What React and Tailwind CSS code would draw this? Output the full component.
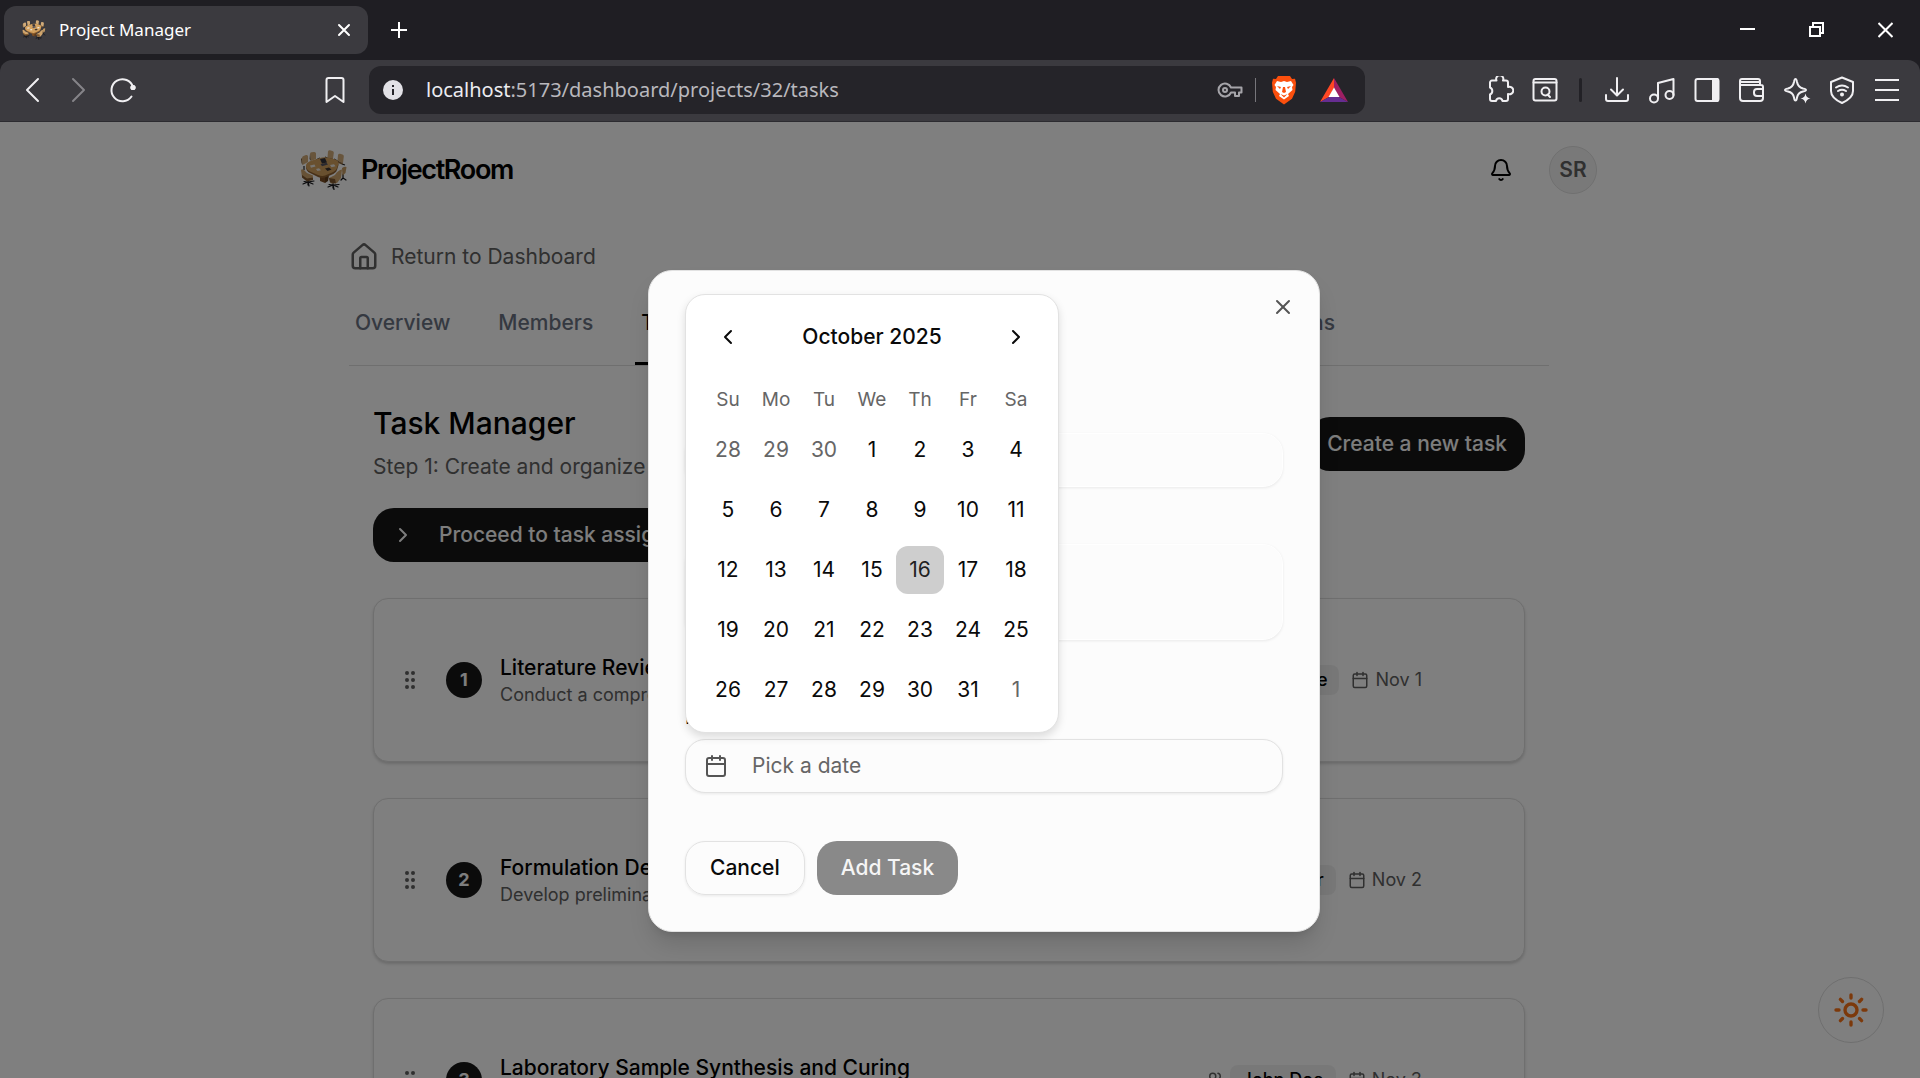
import React from "react";
import { Bell, Calendar, ChevronLeft, ChevronRight, GripVertical, House, Sun, Users, X } from "lucide-react";

const stroke = { fill: "none", stroke: "currentColor", strokeWidth: 2, strokeLinecap: "round", strokeLinejoin: "round" };

function MeetingTable({ className }) {
  return (
    <svg viewBox="0 0 46 40" className={className} aria-hidden="true">
      <path d="M3 16v4M15 10l4-2M33 9l5 3M41 14l3 1M24 7l4 2" stroke="#26262b" strokeWidth="1.200" />
      <path d="M1 8q0-1.500 1.500-2L5 5q2-.5 2 1.500V12l-5.500 3z" fill="#d0aa78" />
      <path d="M1 8l.5 7L.5 13 0 9z" fill="#7b5a34" />
      <path d="M9 4q0-1.500 1.500-1.800L13 2q2-.2 2 1.500V9l-5 2z" fill="#d0aa78" />
      <path d="M9 4l1 7L8.500 9z" fill="#7b5a34" />
      <path d="M27 1.500Q27.500 0 29 .3L31.500 1q1.500.5 1.300 2L32 8.500l-5.500-1z" fill="#d0aa78" />
      <path d="M26.500 7.500l5.500 1-.5 1.500-5-1z" fill="#8a6437" />
      <path d="M37 5q.5-1.500 2-1.200l2.500.8q1.500.5 1.300 2L42 13l-5.500-2z" fill="#d0aa78" />
      <path d="M36.500 11l5.500 2-1 1.500-5-2z" fill="#8a6437" />
      <path d="M19 25h7l-2 8-5-2z" fill="#7a4d24" />
      <path d="M24 25h4l-1 6-3 2z" fill="#5f3a19" />
      <path d="M5 17q0-3 6-5l8-3q3-1 7-.5l7 1.500q5 1.500 4.500 5L36 20q-1 3-6 5l-6 2.500q-3 1-7-.5l-8-4q-4-2-4-6z" fill="#8f602f" />
      <path d="M5 15.500q0-3 6-5l8-2.500q3-1 7-.5l7 1.500q5 1.500 4.500 4.500L36 18q-1 3-6 5l-6 2.500q-3 1-7-.5l-8-3.500q-4-2-4-6z" fill="#d3a15f" />
      <path d="M19 9l5-1 2 4.500-5 1z" fill="#33323b" />
      <path d="M19.500 14l6-1.300 1.500 1.800-6 1.800z" fill="#55535e" />
      <path d="M9 15.500l4.500-1 1 2-4.500 1.200zM29 15l4-.8 1.500 2-4 1zM15 19l3-.8 2 2-3.500.8z" fill="#efebe4" />
      <path d="M24 18.500l4-1 2.500 2-4 1.500z" fill="#3c3330" />
      <path d="M7 29v6M2 34l5-2 5 2M3 31.500l4 .5 6-1M7 32l1 4M32 33v5M27 37l5-2 5 2M28 34.500l4 .5 6-.5M32 35l1 4.500M42 24v4l3 2M42 28l-2 2" fill="none" stroke="#16161a" strokeWidth="1.200" strokeLinecap="round" />
      <path d="M0 20q1-1.500 3 0l3 3 6 2.500-.5 4L6 30l-5-3z" fill="#cfa46c" />
      <path d="M1 25l5 3.500 6-1v2.500l-6 1.500-5-4z" fill="#80592f" />
      <path d="M41 18q3-2 4.500-1l-1 6-3 2.500z" fill="#c49a62" />
      <path d="M28 28l6-3q3-5 7-5.500L40 28l-4 5-6 .5z" fill="#cfa46c" />
      <path d="M28 28l6 1 1 4.500-6-1z" fill="#80592f" />
    </svg>
  );
}

function ToolButton({ label, children, className = "w-[45px]" }) {
  return (
    <button type="button" aria-label={label} className={`flex h-12 shrink-0 items-center justify-center text-[#f0eff2] ${className}`}>
      {children}
    </button>
  );
}

function Glyph({ children, size = 28 }) {
  return (
    <svg width={size} height={size} viewBox="0 0 28 28" {...stroke} aria-hidden="true">
      {children}
    </svg>
  );
}

function BrowserChrome() {
  return (
    <div className="shrink-0 bg-[#1f1e23] font-['Noto_Sans',sans-serif] text-white">
      <div className="flex h-[60px] items-center justify-between pl-1">
        <div className="flex items-center">
          <div className="flex h-12 w-[364px] items-center rounded-xl bg-[#3b3a3f] pr-3 pl-[18px]">
            <MeetingTable className="h-5 w-6" />
            <span className="ml-[13px] flex-1 text-[17px]">Project Manager</span>
            <button type="button" aria-label="Close tab" className="flex size-6 items-center justify-center">
              <svg width="14" height="14" viewBox="0 0 14 14" {...stroke} aria-hidden="true"><path d="M2 2l10 10M12 2L2 12" /></svg>
            </button>
          </div>
          <button type="button" aria-label="New tab" className="ml-[7px] flex size-12 items-center justify-center">
            <svg width="16" height="16" viewBox="0 0 16 16" stroke="currentColor" strokeWidth="2" aria-hidden="true"><path d="M8 0v16M0 8h16" /></svg>
          </button>
        </div>
        <div className="flex h-full items-center">
          <button type="button" aria-label="Minimize" className="flex h-full w-[69px] items-center justify-center">
            <svg width="15" height="16" viewBox="0 0 15 16" aria-hidden="true"><path d="M0 7h15" stroke="currentColor" strokeWidth="2" /></svg>
          </button>
          <button type="button" aria-label="Restore" className="flex h-full w-[69px] items-center justify-center">
            <svg width="15" height="16" viewBox="0 0 15 16" fill="none" stroke="currentColor" strokeWidth="2" aria-hidden="true"><path d="M1 5h10v9H1zM4 5V1h10v10h-3" /></svg>
          </button>
          <button type="button" aria-label="Close window" className="flex h-full w-[69px] items-center justify-center">
            <svg width="15" height="16" viewBox="0 0 15 16" stroke="currentColor" strokeWidth="2" aria-hidden="true"><path d="M.5 1l14 14M14.500 1l-14 14" /></svg>
          </button>
        </div>
      </div>
      <div className="flex h-[62px] items-start rounded-t-xl border-b border-[#2c2b30] bg-[#3b3a3f] pt-[6px]">
        <div className="flex w-[369px] shrink-0 items-center pl-[10px]">
          <ToolButton label="Back"><Glyph><path d="M19 3L8 14l11 11" /></Glyph></ToolButton>
          <span className="text-[#858489] [&_button]:text-[#858489]">
            <ToolButton label="Forward"><Glyph><path d="M9 3l11 11L9 25" /></Glyph></ToolButton>
          </span>
          <ToolButton label="Reload">
            <Glyph><path d="M24 11A11 11 0 1 0 22.500 20.500" /><circle cx="24" cy="11.500" r="2.600" fill="currentColor" stroke="none" /><circle cx="24" cy="11.500" r="1.500" fill="currentColor" /></Glyph>
          </ToolButton>
          <ToolButton label="Bookmark" className="ml-auto w-[68px]">
            <Glyph><path d="M5.500 4a2 2 0 0 1 2-2h13a2 2 0 0 1 2 2v22l-8.500-6-8.500 6z" /></Glyph>
          </ToolButton>
        </div>
        <div className="flex h-12 min-w-0 flex-1 items-center rounded-xl bg-[#252429] pr-[13px] pl-[14px]">
          <svg width="20" height="20" viewBox="0 0 20 20" className="shrink-0" aria-hidden="true">
            <circle cx="10" cy="10" r="10" fill="#e2e1e6" />
            <path d="M10 9v6M10 5v2" stroke="#252429" strokeWidth="2" />
          </svg>
          <p className="ml-[23px] flex-1 truncate text-xl text-[#b9b8bd]"><span className="text-[#ececf0]">localhost</span>:5173/dashboard/projects/32/tasks</p>
          <svg width="26" height="20" viewBox="0 0 26 20" fill="none" stroke="#a5a4a9" strokeWidth="2" strokeLinejoin="round" aria-hidden="true">
            <path d="M14 7.500A6.500 6.500 0 1 0 14 12.500h4V16h4v-3.500h2.500v-5z" /><circle cx="8" cy="10" r="2" />
          </svg>
          <span className="mx-[12px] h-6 w-px bg-[#77767b]" />
          <svg width="32" height="30" viewBox="0 0 32 30" aria-label="Brave Shields">
            <path d="M10 1h12l2 3 3-.3 1 4-.8 9-3.200 7L16 29.500 8 23.700 4.800 16.700 4 7.700l1-4L8 4z" fill="#fb4f0d" />
            <path d="M9 6l4 1 3-1 3 1 4-1 2.500 4-1.500 2 .5 3-4.500 4 1 2-5 3.500L11 21l1-2-4.500-4 .5-3-1.500-2z" fill="#fff" />
            <path d="M9 11l4 1-1 2zM23 11l-4 1 1 2zM15 12h2l1 5-2 1-2-1zM12.500 19l3.500 1.500 3.500-1.500-3.500 3.500z" fill="#fb4f0d" />
          </svg>
          <svg width="28" height="24" viewBox="0 0 28 24" className="ml-[20px]" aria-label="Brave Rewards">
            <path d="M14 0L0 24l9-5 5-9z" fill="#ff4724" /><path d="M14 0l14 24-9-5-5-9z" fill="#9e1f63" /><path d="M0 24h28l-9-5H9z" fill="#662d91" /><path d="M14 9.500l5.500 9.500h-11z" fill="#fff" />
          </svg>
          <span className="w-1" />
        </div>
        <div className="flex w-[555px] shrink-0 items-center justify-end pr-[11px]">
          <ToolButton label="Extensions">
            <Glyph><path d="M4 6.500a2 2 0 0 1 2-2h4.500a3.600 3.600 0 1 1 6.500 0H20a2 2 0 0 1 2 2V11a3.800 3.800 0 1 1 0 7v5a2 2 0 0 1-2 2h-3.500a3.300 3.300 0 0 0-6.500 0H6a2 2 0 0 1-2-2v-4.500a3.800 3.800 0 0 0 0-7z" /></Glyph>
          </ToolButton>
          <ToolButton label="Search tabs">
            <Glyph><rect x="2.500" y="3" width="23" height="21.500" rx="2" /><path d="M2.500 6.500h23M16.500 18.500l2.500 2.500" /><circle cx="14.500" cy="15.500" r="4" /></Glyph>
          </ToolButton>
          <span className="mx-3 h-6 w-[3px] rounded-full bg-[#222126]" />
          <ToolButton label="Downloads"><Glyph><path d="M14 2v17M8 13.500l6 6 6-6M3 19v4a2 2 0 0 0 2 2h18a2 2 0 0 0 2-2v-4" /></Glyph></ToolButton>
          <ToolButton label="Playlist"><Glyph><circle cx="6" cy="22.500" r="4" /><circle cx="21.500" cy="19" r="4" /><path d="M10 22V7l15.500-4v16" /></Glyph></ToolButton>
          <ToolButton label="Sidebar"><Glyph><rect x="2.500" y="3" width="23" height="22" rx="2" /><path d="M20 3h4.500v22H20z" fill="currentColor" /></Glyph></ToolButton>
          <ToolButton label="Wallet"><Glyph><path d="M22 9V5a2 2 0 0 0-2-2H4a2 2 0 0 0-2 2v17a3 3 0 0 0 3 3h17a3 3 0 0 0 3-3V11a2 2 0 0 0-2-2H3M3 6h18M25 13h-6a3 3 0 0 0-3 3v1a3 3 0 0 0 3 3h6" /></Glyph></ToolButton>
          <ToolButton label="Leo AI"><Glyph><path d="M12.500 3q1 0 1.500 3 1 5 6 6.500 3 .5 3 1.500t-3 1.500q-5 1-6 6-.5 3-1.500 3t-1.500-3q-1-5-6-6-3-.5-3-1.500t3-1.500q5-1.500 6-6.500.5-3 1.500-3z" /><path d="M22.500 17.500q.8 4.500 5 5-4.200.7-5 5-.8-4.300-5-5 4.200-.5 5-5z" fill="currentColor" stroke="none" /></Glyph></ToolButton>
          <ToolButton label="VPN"><Glyph><path d="M14 1.500L25 6v9q0 7-11 12Q3 22 3 15V6z" /><path d="M8 11.500q6-4 12 0M10 15q4-2.500 8 0" /><circle cx="14" cy="18.500" r="1" fill="currentColor" /></Glyph></ToolButton>
          <ToolButton label="Menu"><Glyph><path d="M2 4h24M2 14h24M2 24h24" strokeLinecap="butt" /></Glyph></ToolButton>
        </div>
      </div>
    </div>
  );
}

const TASKS = [
  { title: "Literature Review", text: "Conduct a comprehensive review", who: "Jane Lee", date: "Nov 1" },
  { title: "Formulation Design", text: "Develop preliminary formulations", who: "Ann Baker", date: "Nov 2" },
  { title: "Laboratory Sample Synthesis and Curing", text: "Prepare and cure samples", who: "John Doe", date: "Nov 3" },
];

function TaskCard({ task, number }) {
  return (
    <li className="flex h-[164px] items-center rounded-[15px] border border-[#dedede] bg-[#fefefe] pr-[102px] pl-6 shadow-[0_2px_3px_rgba(0,0,0,0.16)]">
      <GripVertical size={24} className="text-[#606060]" />
      <span className="ml-6 flex size-9 items-center justify-center rounded-full bg-[#171717] text-lg font-bold text-[#fafafa]">{number}</span>
      <div className="ml-[18px] min-w-0 flex-1 pt-[2px]">
        <h2 className="truncate text-[21px] leading-7 font-medium text-black">{task.title}</h2>
        <p className="truncate text-lg leading-[26px] text-[#606060]">{task.text}</p>
      </div>
      <Users size={18} className="text-[#606060]" />
      <span className="ml-[6px] flex h-[30px] items-center rounded-lg bg-[#f1f1f1] px-3 text-lg font-medium text-black">{task.who}</span>
      <span className="ml-3 flex items-center gap-[6px] text-lg text-[#606060]"><Calendar size={18} />{task.date}</span>
    </li>
  );
}

function ProjectPage() {
  return (
    <div className="pr-[22px] text-black">
      <header className="mx-auto flex h-24 max-w-[1296px] items-center">
        <MeetingTable className="h-10 w-[46px]" />
        <span className="ml-[14px] text-[27px] font-semibold tracking-tighter">ProjectRoom</span>
        <button type="button" aria-label="Notifications" className="ml-auto flex size-12 items-center justify-center"><Bell size={24} /></button>
        <button type="button" className="ml-6 flex size-12 items-center justify-center rounded-full border border-[#e0e0e0] bg-[#f3f3f3] text-[21px] font-semibold text-[#606060]">SR</button>
      </header>
      <main className="mx-auto max-w-[1200px] pt-6">
        <a href="#dashboard" className="flex h-[30px] items-center gap-3 text-[21px] text-[#606060]"><House size={30} />Return to Dashboard</a>
        <nav className="mt-3 border-b border-[#dedede]">
          <div className="flex max-w-[992px] gap-9 text-[21px] leading-[30px] font-medium text-gray-500">
            <a href="#overview" className="border-b-[3px] border-transparent px-[6px] py-6">Overview</a>
            <a href="#members" className="border-b-[3px] border-transparent px-[6px] py-6">Members</a>
            <a href="#tasks" className="border-b-[3px] border-black px-[6px] py-6 text-black">Tasks</a>
            <a href="#submissions" className="ml-auto border-b-[3px] border-transparent px-[6px] py-6">Submissions</a>
          </div>
        </nav>
        <div className="px-6 pt-[39px]">
          <div className="flex items-center justify-between">
            <div>
              <h1 className="text-3xl leading-9 font-medium">Task Manager</h1>
              <p className="mt-[11px] text-[21px] leading-[30px] text-[#606060]">Step 1: Create and organize your tasks</p>
            </div>
            <button type="button" className="h-[54px] rounded-[21px] bg-[#171717] px-[18px] text-[21px] font-medium text-[#fafafa]">Create a new task</button>
          </div>
          <button type="button" className="mt-[26px] flex h-[54px] items-center gap-6 rounded-[21px] bg-[#171717] px-[18px] text-[21px] font-medium text-[#fafafa]"><ChevronRight size={24} />Proceed to task assignment</button>
          <ol className="mt-9 flex flex-col gap-9">
            {TASKS.map((task, i) => <TaskCard key={task.title} task={task} number={i + 1} />)}
          </ol>
        </div>
      </main>
    </div>
  );
}

const WEEKS = [
  [28, 29, 30, 1, 2, 3, 4],
  [5, 6, 7, 8, 9, 10, 11],
  [12, 13, 14, 15, 16, 17, 18],
  [19, 20, 21, 22, 23, 24, 25],
  [26, 27, 28, 29, 30, 31, 1],
];

function DatePopover() {
  return (
    <div className="absolute bottom-[calc(100%+6px)] left-0 rounded-[20px] border border-[#e2e2e2] bg-white p-[18px] shadow-[0_4px_8px_rgba(0,0,0,0.13)]">
      <div className="flex h-12 items-center justify-between">
        <button type="button" aria-label="Previous month" className="flex size-12 items-center justify-center"><ChevronLeft size={24} /></button>
        <span className="text-[21px] font-medium">October 2025</span>
        <button type="button" aria-label="Next month" className="flex size-12 items-center justify-center"><ChevronRight size={24} /></button>
      </div>
      <table className="mt-[25px] table-fixed">
        <thead>
          <tr>{["Su", "Mo", "Tu", "We", "Th", "Fr", "Sa"].map((d) => <th key={d} scope="col" className="h-7 w-12 p-0 text-[19px] leading-7 font-normal text-[#666]">{d}</th>)}</tr>
        </thead>
        <tbody>
          {WEEKS.map((week, w) => (
            <tr key={w}>
              {week.map((day, i) => {
                const outside = (w === 0 && day > 7) || (w === 4 && day < 7);
                const today = w === 2 && day === 16;
                return (
                  <td key={i} className="p-0 pt-3">
                    <button type="button" className={`block size-12 rounded-xl text-[21px] ${today ? "bg-[#cecece] text-[#222]" : outside ? "text-[#666]" : "text-[#0a0a0a]"}`}>{day}</button>
                  </td>
                );
              })}
            </tr>
          ))}
        </tbody>
      </table>
    </div>
  );
}

function TaskDialog() {
  return (
    <div className="absolute inset-0 flex items-start justify-center bg-black/50 pt-[148px] pl-12">
      <form role="dialog" aria-label="Add task" onSubmit={(e) => e.preventDefault()} className="relative w-[672px] rounded-3xl border border-[#e2e2e2] bg-[#fcfcfc] p-9 text-[21px] text-[#0a0a0a] shadow-[0_15px_23px_-4px_rgba(0,0,0,0.14),0_6px_9px_-6px_rgba(0,0,0,0.14)]">
        <button type="button" aria-label="Close" className="absolute top-6 right-6 text-[#555]"><X size={24} /></button>
        <h2 className="text-[27px] leading-9 font-semibold">Add Task</h2>
        <label htmlFor="title" className="mt-[33px] block leading-[21px] font-medium">Title</label>
        <input id="title" className="mt-9 block h-[54px] w-full rounded-[20px] border border-white bg-[#fcfcfc] px-[18px] shadow-[0_1px_3px_rgba(0,0,0,0.08)]" />
        <label htmlFor="details" className="mt-6 block leading-[21px] font-medium">Description</label>
        <textarea id="details" className="mt-3 block h-24 w-full resize-none rounded-[20px] border border-white bg-[#fcfcfc] px-[18px] shadow-[0_1px_3px_rgba(0,0,0,0.08)]" />
        <label htmlFor="due" className="mt-[66px] block leading-[21px] font-medium">Due Date</label>
        <div className="relative mt-3">
          <button id="due" type="button" className="flex h-[54px] w-full items-center gap-6 rounded-[20px] border border-[#e2e2e2] bg-[#fcfcfc] px-[18px] text-[#666] shadow-[0_1px_3px_rgba(0,0,0,0.08)]"><Calendar size={24} className="text-[#555]" />Pick a date</button>
          <DatePopover />
        </div>
        <div className="mt-12 flex gap-3 font-medium">
          <button type="button" className="h-[54px] rounded-[20px] border border-[#e2e2e2] px-6 shadow-[0_1px_3px_rgba(0,0,0,0.08)]">Cancel</button>
          <button type="submit" className="h-[54px] rounded-[20px] bg-[#898989] px-6 text-[#f5f5f5]">Add Task</button>
        </div>
      </form>
    </div>
  );
}

export default function App() {
  return (
    <div className="flex h-screen flex-col overflow-hidden">
      <BrowserChrome />
      <div className="relative min-h-0 flex-1 overflow-hidden bg-[#fefefe] font-['Inter',sans-serif]">
        <ProjectPage />
        <button type="button" aria-label="Toggle theme" className="absolute right-9 bottom-[35px] flex size-[66px] items-center justify-center rounded-full border border-[#dedede] bg-[#fefefe] text-[#f97316]"><Sun size={36} strokeWidth={2.25} /></button>
        <TaskDialog />
      </div>
    </div>
  );
}
